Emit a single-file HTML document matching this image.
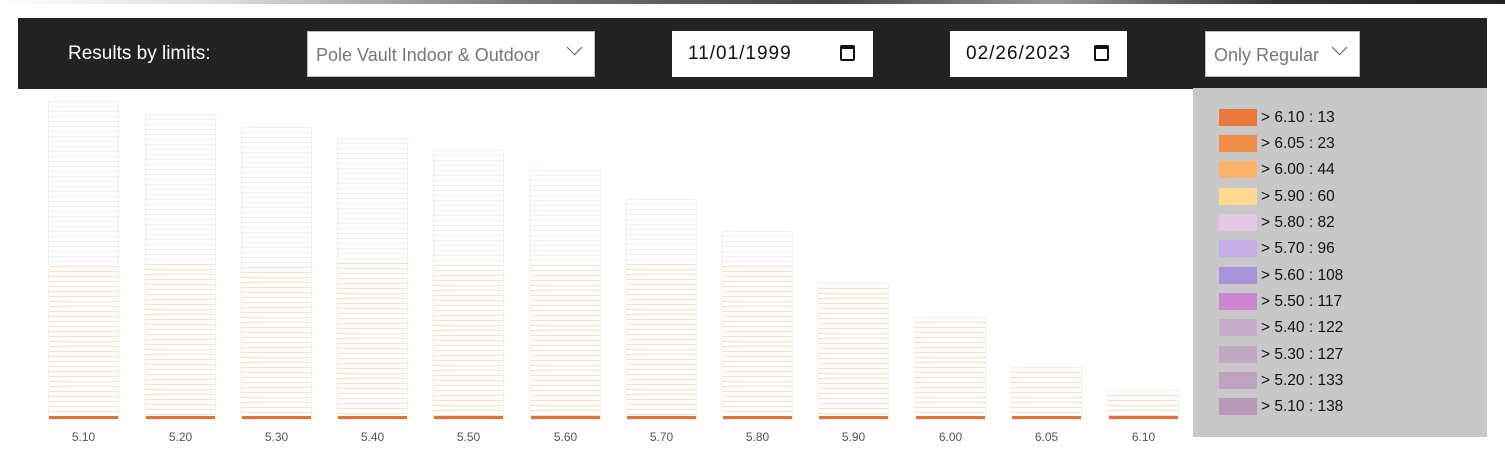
<!DOCTYPE html>
<html><head><style>
*{margin:0;padding:0;box-sizing:border-box}
body{width:1505px;height:467px;background:#fff;font-family:"Liberation Sans",sans-serif;position:relative;overflow:hidden}
.strip{position:absolute;left:0;top:0;width:1505px;height:4px;background:linear-gradient(90deg,#fff 0,#ddd 15%,#777 35%,#444 55%,#999 70%,#333 85%,#222 100%)}
.bar{position:absolute;left:18px;top:18px;width:1469px;height:71px;background:#222}
.title{position:absolute;left:68px;top:43px;color:#fff;font-size:19px}
.box{position:absolute;top:31px;height:46px;background:#fff;border:1px solid #bbb;font-size:18px;color:#777;padding:13px 8px}
.date{color:#111;font-size:19px;padding:12px 16px;letter-spacing:1px;border:none}
.chev{position:absolute;right:14px;top:10px;width:11px;height:11px;border-right:1.5px solid #555;border-bottom:1.5px solid #555;transform:rotate(45deg)}
.cal{position:absolute;right:18px;top:14px;width:15px;height:16px;border:2px solid #111;border-top-width:4px;border-radius:2px}
.b{position:absolute;width:71px;bottom:47px;border:1px solid #fcebe0;
background:linear-gradient(#fff0 calc(100% - 3px),#dc7440 calc(100% - 3px));}
.b::before{content:"";position:absolute;inset:0;
background:repeating-linear-gradient(180deg,#fff 0 4px,#f9dfcc 4px 5px);
clip-path:inset(var(--o) 0 3px 0)}
.b::after{content:"";position:absolute;left:0;right:0;top:0;height:var(--o);
background:repeating-linear-gradient(180deg,#fff 0 4px,#f3eef8 4px 5px)}
.lab{position:absolute;top:430px;width:71px;text-align:center;font-size:12px;color:#555}
.leg{position:absolute;left:1193px;top:88px;width:294px;height:349px;background:#c8c8c8}
.it{position:absolute;left:26px;height:18px;font-size:15.5px;color:#111;line-height:18px}
.it i{display:inline-block;width:38px;height:17px;vertical-align:top;margin-right:4px}
</style></head><body>
<div class="strip"></div>
<div class="bar"></div>
<div class="title">Results by limits:</div>
<div class="box" style="left:307px;width:288px">Pole Vault Indoor &amp; Outdoor<span class="chev"></span></div>
<div class="box date" style="left:672px;width:201px">11/01/1999<span class="cal"></span></div>
<div class="box date" style="left:950px;width:177px">02/26/2023<span class="cal"></span></div>
<div class="box" style="left:1205px;width:155px">Only Regular<span class="chev"></span></div>

<div class="b" style="left:48px;top:101px;--o:161px"></div>
<div class="b" style="left:145px;top:114px;--o:148px"></div>
<div class="b" style="left:241px;top:127px;--o:135px"></div>
<div class="b" style="left:337px;top:138px;--o:124px"></div>
<div class="b" style="left:433px;top:150px;--o:112px"></div>
<div class="b" style="left:530px;top:170px;--o:92px"></div>
<div class="b" style="left:626px;top:199px;--o:63px"></div>
<div class="b" style="left:722px;top:231px;--o:31px"></div>
<div class="b" style="left:818px;top:283px;--o:0px"></div>
<div class="b" style="left:915px;top:317px;--o:0px"></div>
<div class="b" style="left:1011px;top:367px;--o:0px"></div>
<div class="b" style="left:1108px;top:390px;--o:0px"></div>

<div class="lab" style="left:48px">5.10</div>
<div class="lab" style="left:145px">5.20</div>
<div class="lab" style="left:241px">5.30</div>
<div class="lab" style="left:337px">5.40</div>
<div class="lab" style="left:433px">5.50</div>
<div class="lab" style="left:530px">5.60</div>
<div class="lab" style="left:626px">5.70</div>
<div class="lab" style="left:722px">5.80</div>
<div class="lab" style="left:818px">5.90</div>
<div class="lab" style="left:915px">6.00</div>
<div class="lab" style="left:1011px">6.05</div>
<div class="lab" style="left:1108px">6.10</div>

<div class="leg">
<div class="it" style="top:21px"><i style="background:#e8793a"></i>&gt; 6.10 : 13</div>
<div class="it" style="top:47px"><i style="background:#ef8f4a"></i>&gt; 6.05 : 23</div>
<div class="it" style="top:73px"><i style="background:#fdb26b"></i>&gt; 6.00 : 44</div>
<div class="it" style="top:100px"><i style="background:#fed98f"></i>&gt; 5.90 : 60</div>
<div class="it" style="top:126px"><i style="background:#e2c8e4"></i>&gt; 5.80 : 82</div>
<div class="it" style="top:152px"><i style="background:#c7aee6"></i>&gt; 5.70 : 96</div>
<div class="it" style="top:179px"><i style="background:#ab93db"></i>&gt; 5.60 : 108</div>
<div class="it" style="top:205px"><i style="background:#cc85cf"></i>&gt; 5.50 : 117</div>
<div class="it" style="top:231px"><i style="background:#c6aec8"></i>&gt; 5.40 : 122</div>
<div class="it" style="top:258px"><i style="background:#c3a8c4"></i>&gt; 5.30 : 127</div>
<div class="it" style="top:284px"><i style="background:#bea2bf"></i>&gt; 5.20 : 133</div>
<div class="it" style="top:310px"><i style="background:#b89ab8"></i>&gt; 5.10 : 138</div>
</div>
</body></html>
